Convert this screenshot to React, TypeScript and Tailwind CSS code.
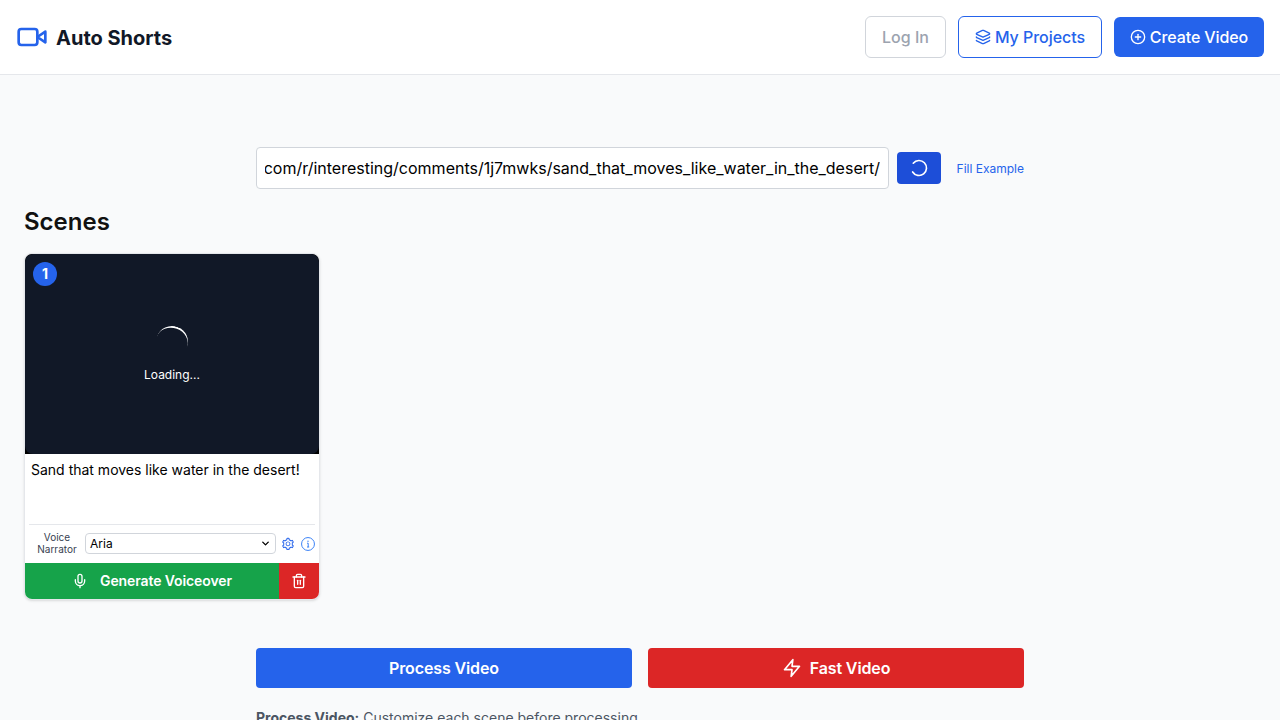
import { AiOutlineSetting } from "react-icons/ai";
import { FiZap } from "react-icons/fi";
import { ChevronDown, CirclePlus, Layers, LoaderCircle, Mic, Trash2 } from "lucide-react";

function Logo() {
  return (
    <svg width="32" height="32" viewBox="0 0 24 24" fill="none" stroke="currentColor" strokeWidth="2" strokeLinecap="round" strokeLinejoin="round" className="text-[#2563eb]">
      <path d="m22 8-6 4 6 4V8Z" />
      <rect x="2" y="6" width="14" height="12" rx="2" />
    </svg>
  );
}

function InfoIcon() {
  return (
    <svg width="14" height="14" viewBox="0 0 14 14" fill="none" stroke="currentColor" strokeWidth="1" className="ml-1.5 shrink-0 text-[#3b82f6]">
      <circle cx="7" cy="7" r="6.45" />
      <path d="M6 6.2h1.2V10M6 10h2.2" />
      <circle cx="7" cy="4.2" r="0.7" fill="currentColor" stroke="none" />
    </svg>
  );
}

function Header() {
  return (
    <header className="flex h-[75px] items-center justify-between border-b border-[#e5e7eb] bg-white px-4">
      <div className="flex items-center gap-2">
        <Logo />
        <span className="pt-0.5 text-xl font-bold text-[#111827]">Auto Shorts</span>
      </div>
      <div className="flex items-center gap-3 whitespace-nowrap font-medium">
        <button className="w-[81px] rounded-md border border-[#d1d5db] py-2 text-[#9ca3af]">Log In</button>
        <button className="flex w-36 items-center justify-center gap-1 rounded-md border border-[#2563eb] py-2 tracking-[-0.04px] text-[#2563eb]">
          <Layers size={16} />
          My Projects
        </button>
        <button className="flex w-[150px] items-center justify-center gap-1 rounded-md bg-[#2563eb] py-2 tracking-[-0.1px] text-white">
          <CirclePlus size={16} />
          Create Video
        </button>
      </div>
    </header>
  );
}

function UrlForm() {
  return (
    <div className="mx-auto mt-[72px] flex w-[768px] items-center">
      <div className="flex h-[42px] w-[633px] items-center rounded border border-[#d1d5db] bg-white px-2">
        <div className="flex w-full justify-end overflow-hidden whitespace-nowrap text-base text-black">
          com/r/interesting/comments/1j7mwks/sand_that_moves_like_water_in_the_desert/
        </div>
      </div>
      <button className="ml-2 flex h-8 w-11 items-center justify-center rounded bg-[#1d4ed8] text-white">
        <LoaderCircle size={20} className="rotate-[-140deg]" />
      </button>
      <button className="ml-auto whitespace-nowrap pt-0.5 text-xs text-[#2563eb]">Fill Example</button>
    </div>
  );
}

function SceneCard() {
  return (
    <article className="mt-[15px] w-[296px] overflow-hidden rounded-lg border border-[#e5e7eb] bg-white shadow-sm">
      <div className="h-[200px] bg-black">
        <div className="relative flex h-full flex-col items-center rounded-lg bg-[#111827] pt-[72px] text-white">
          <span className="absolute left-2 top-2 flex h-6 w-6 items-center justify-center rounded-full bg-[#2563eb] text-sm font-bold">1</span>
          <div className="h-8 w-8 rotate-[20deg] rounded-full border-t-2 border-white" />
          <span className="mt-[9px] text-xs leading-4">Loading...</span>
        </div>
      </div>
      <div className="px-1">
        <p className="h-[71px] border-b border-[#e5e7eb] px-0.5 pt-1.5 text-sm leading-5 text-black">Sand that moves like water in the desert!</p>
        <div className="flex h-[38px] items-center pb-px">
          <span className="mb-0.5 w-14 text-center text-[10px] leading-3 text-[#374151]">
            Voice
            <br />
            Narrator
          </span>
          <div className="flex h-[21px] w-[191px] items-center justify-between rounded border border-[#d1d5db] pl-1 pr-1 text-xs text-black">
            <span>Aria</span>
            <ChevronDown size={11} strokeWidth={3} />
          </div>
          <AiOutlineSetting size={14} className="ml-[5px] shrink-0 text-[#2563eb]" />
          <InfoIcon />
        </div>
      </div>
      <div className="flex h-9 text-white">
        <button className="flex flex-1 items-center justify-center gap-3 bg-[#16a34a] text-sm font-semibold tracking-[-0.1px]">
          <Mic size={16} />
          Generate Voiceover
        </button>
        <button className="flex w-10 items-center justify-center bg-[#dc2626]">
          <Trash2 size={16} />
        </button>
      </div>
    </article>
  );
}

export default function App() {
  return (
    <div className="h-screen overflow-hidden bg-[#f9fafb] font-['Inter',sans-serif] text-base text-[#111827]">
      <Header />
      <UrlForm />
      <section className="px-6 pt-[17px]">
        <h2 className="text-2xl font-semibold text-[#111111]">Scenes</h2>
        <SceneCard />
      </section>
      <div className="mx-auto mt-12 w-[768px]">
        <div className="grid grid-cols-2 gap-4 font-semibold tracking-[-0.12px] text-white">
          <button className="h-10 rounded bg-[#2563eb]">Process Video</button>
          <button className="flex h-10 items-center justify-center gap-2 rounded bg-[#dc2626]">
            <FiZap size={20} />
            Fast Video
          </button>
        </div>
        <p className="mt-5 text-sm text-[#4b5563]">
          <strong className="font-bold">Process Video:</strong> Customize each scene before processing.
        </p>
      </div>
    </div>
  );
}
